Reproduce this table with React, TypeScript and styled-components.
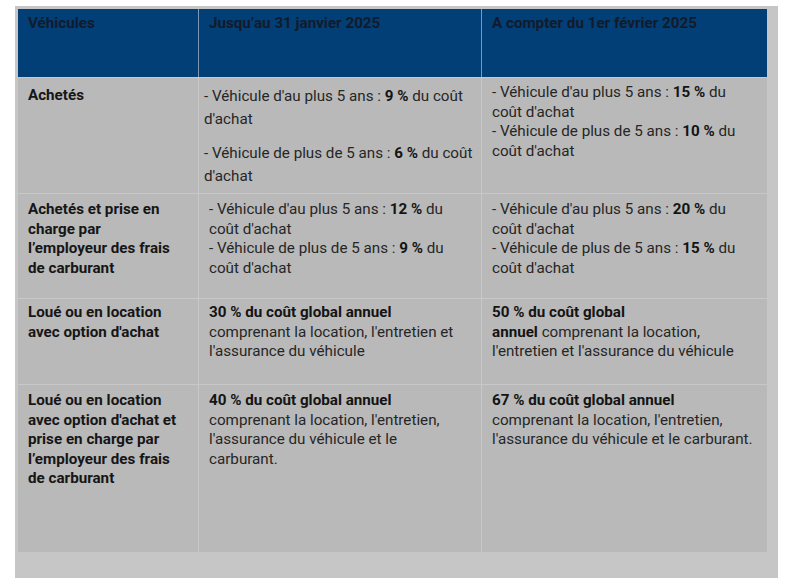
import React from "react";
import styled, { createGlobalStyle } from "styled-components";

const GlobalStyle = createGlobalStyle`
  html, body { margin: 0; padding: 0; background: #ffffff; }
  body { font-family: Roboto, "Liberation Sans", Arial, sans-serif; }
`;

const Frame = styled.div`
  box-sizing: border-box;
  margin: 6px 0 0 15px;
  width: 763px;
  height: 572px;
  background: #c6c6c6;
  padding: 3px 11px 0 3px;
`;

const Table = styled.div`
  display: grid;
  grid-template-columns: 180px 283px 286px;
  grid-template-rows: 68px 116px 105px 86px 168px;
  font-size: 15.2px;
  line-height: 19.5px;
`;

const HeadCell = styled.div<{ $first?: boolean }>`
  box-sizing: border-box;
  background: #023f76;
  color: #121b2b;
  font-weight: 700;
  padding: 5px 10px;
  border-left: ${(p) => (p.$first ? "none" : "1px solid #7e97b3")};
`;

const Cell = styled.div<{ $first?: boolean; $pt?: number; $pl?: number }>`
  box-sizing: border-box;
  background: #b9b9b9;
  color: #262626;
  padding: ${(p) => p.$pt ?? 6}px 4px 0 ${(p) => p.$pl ?? 10}px;
  border-top: 1px solid #c8c8c8;
  border-left: ${(p) => (p.$first ? "none" : "1px solid #c8c8c8")};
  white-space: nowrap;
`;

const Label = styled.div`
  font-weight: 700;
  color: #161616;
`;

const Para = styled.div<{ $lh?: number; $gap?: number }>`
  line-height: ${(p) => p.$lh ?? 19.5}px;
  margin-bottom: ${(p) => p.$gap ?? 0}px;
`;

const B = styled.b`
  font-weight: 700;
  color: #141414;
`;

export default function App() {
  return (
    <>
      <GlobalStyle />
      <Frame>
        <Table>
          <HeadCell $first>Véhicules</HeadCell>
          <HeadCell>Jusqu’au 31 janvier 2025</HeadCell>
          <HeadCell>A compter du 1er février 2025</HeadCell>

          <Cell $first $pt={8}>
            <Label>Achetés</Label>
          </Cell>
          <Cell $pt={7} $pl={5}>
            <Para $lh={23} $gap={11}>
              - Véhicule d'au plus 5 ans : <B>9 %</B> du coût
              <br />
              d'achat
            </Para>
            <Para $lh={23}>
              - Véhicule de plus de 5 ans : <B>6 %</B> du coût
              <br />
              d'achat
            </Para>
          </Cell>
          <Cell $pt={5}>
            <Para>
              - Véhicule d'au plus 5 ans : <B>15 %</B> du
              <br />
              coût d'achat
              <br />
              - Véhicule de plus de 5 ans : <B>10 %</B> du
              <br />
              coût d'achat
            </Para>
          </Cell>

          <Cell $first>
            <Label>
              Achetés et prise en
              <br />
              charge par
              <br />
              l’employeur des frais
              <br />
              de carburant
            </Label>
          </Cell>
          <Cell>
            <Para>
              - Véhicule d'au plus 5 ans : <B>12 %</B> du
              <br />
              coût d'achat
              <br />
              - Véhicule de plus de 5 ans : <B>9 %</B> du
              <br />
              coût d'achat
            </Para>
          </Cell>
          <Cell>
            <Para>
              - Véhicule d'au plus 5 ans : <B>20 %</B> du
              <br />
              coût d'achat
              <br />
              - Véhicule de plus de 5 ans : <B>15 %</B> du
              <br />
              coût d'achat
            </Para>
          </Cell>

          <Cell $first $pt={4}>
            <Label>
              Loué ou en location
              <br />
              avec option d'achat
            </Label>
          </Cell>
          <Cell $pt={4}>
            <Para>
              <B>30 % du coût global annuel</B>
              <br />
              comprenant la location, l'entretien et
              <br />
              l'assurance du véhicule
            </Para>
          </Cell>
          <Cell $pt={4}>
            <Para>
              <B>50 % du coût global</B>
              <br />
              <B>annuel</B> comprenant la location,
              <br />
              l'entretien et l'assurance du véhicule
            </Para>
          </Cell>

          <Cell $first $pt={6}>
            <Label>
              Loué ou en location
              <br />
              avec option d'achat et
              <br />
              prise en charge par
              <br />
              l’employeur des frais
              <br />
              de carburant
            </Label>
          </Cell>
          <Cell $pt={6}>
            <Para>
              <B>40 % du coût global annuel</B>
              <br />
              comprenant la location, l'entretien,
              <br />
              l'assurance du véhicule et le
              <br />
              carburant.
            </Para>
          </Cell>
          <Cell $pt={6}>
            <Para>
              <B>67 % du coût global annuel</B>
              <br />
              comprenant la location, l'entretien,
              <br />
              l'assurance du véhicule et le carburant.
            </Para>
          </Cell>
        </Table>
      </Frame>
    </>
  );
}
